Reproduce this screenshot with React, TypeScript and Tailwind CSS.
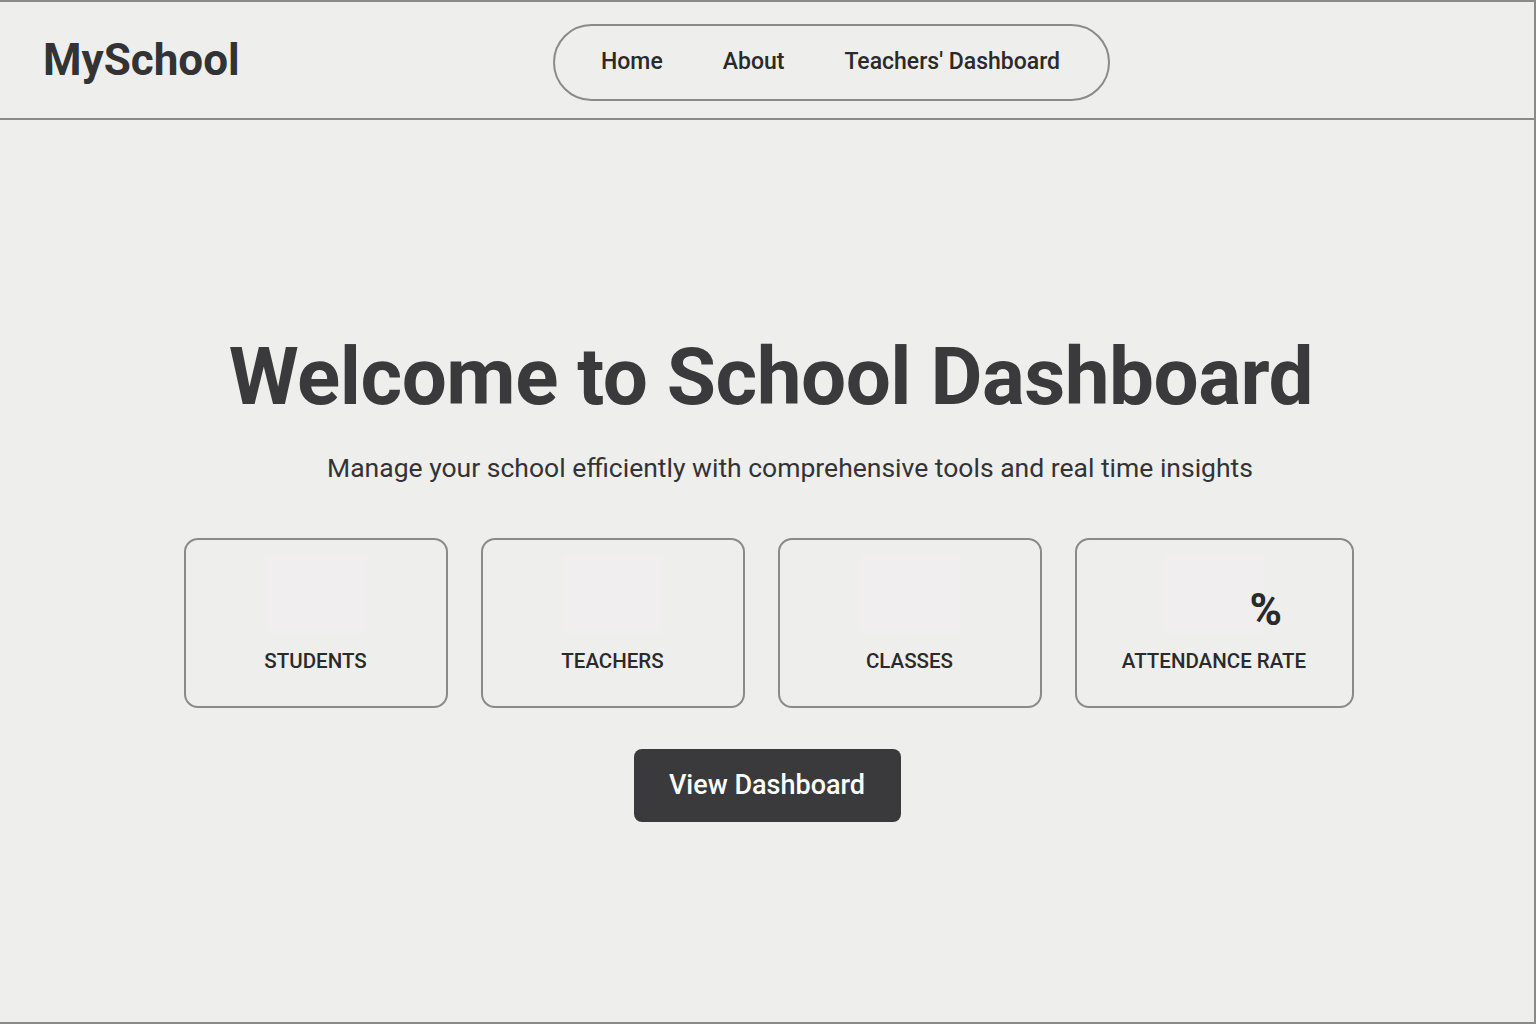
const stats = [
  { label: "STUDENTS", value: "", w: "w-[264px]" },
  { label: "TEACHERS", value: "", w: "w-[264px]" },
  { label: "CLASSES", value: "", w: "w-[264px]" },
  { label: "ATTENDANCE RATE", value: "%", w: "w-[279px]" },
];

export default function App() {
  return (
    <div
      className="h-screen w-full flex flex-col bg-[#eeeeed] border-t-2 border-r-2 border-b-2 border-[#8a8a8a] text-[#3a3a3c]"
      style={{ fontFamily: "Roboto, 'Liberation Sans', sans-serif" }}
    >
      <header className="h-[118px] shrink-0 flex items-center border-b-2 border-[#8a8a8a] relative">
        <h1 className="pl-[43px] text-[44px] font-bold text-[#333335]">MySchool</h1>
        <nav className="absolute left-[553px] top-[22px] w-[557px] h-[77px] rounded-full border-2 border-[#8a8a8a] flex items-center pl-[46px] gap-[60px] text-[23px] font-medium text-[#2a2a2a]">
          <a href="#">Home</a>
          <a href="#">About</a>
          <a href="#">Teachers' Dashboard</a>
        </nav>
      </header>

      <main className="flex-1 flex flex-col items-center pt-[217px]">
        <h2 className="ml-[8px] text-[80px] leading-none font-bold tracking-[-0.5px] text-[#3a3a3c]">
          Welcome to School Dashboard
        </h2>
        <p className="mt-[31px] ml-[46px] text-[26.5px] text-[#333335]">
          Manage your school efficiently with comprehensive tools and real time insights
        </p>

        <div className="mt-[50px] ml-[3px] flex gap-[33px]">
          {stats.map((s) => (
            <div
              key={s.label}
              className={`${s.w} h-[170px] rounded-[14px] border-2 border-[#8a8a8a] flex flex-col items-center pt-[16px]`}
            >
              <div className="relative w-[100px] h-[78px] bg-[#f0eeee]">
                {s.value && (
                  <span className="absolute right-[-18px] top-[32px] text-[44px] leading-none font-bold text-[#2a2a2a]">
                    {s.value}
                  </span>
                )}
              </div>
              <span className="mt-[12px] text-[20.5px] font-medium text-[#2a2a2a]">{s.label}</span>
            </div>
          ))}
        </div>

        <button className="mt-[41px] w-[267px] h-[73px] rounded-[8px] bg-[#3a3a3c] text-white text-[27px] font-medium">
          View Dashboard
        </button>
      </main>
    </div>
  );
}
